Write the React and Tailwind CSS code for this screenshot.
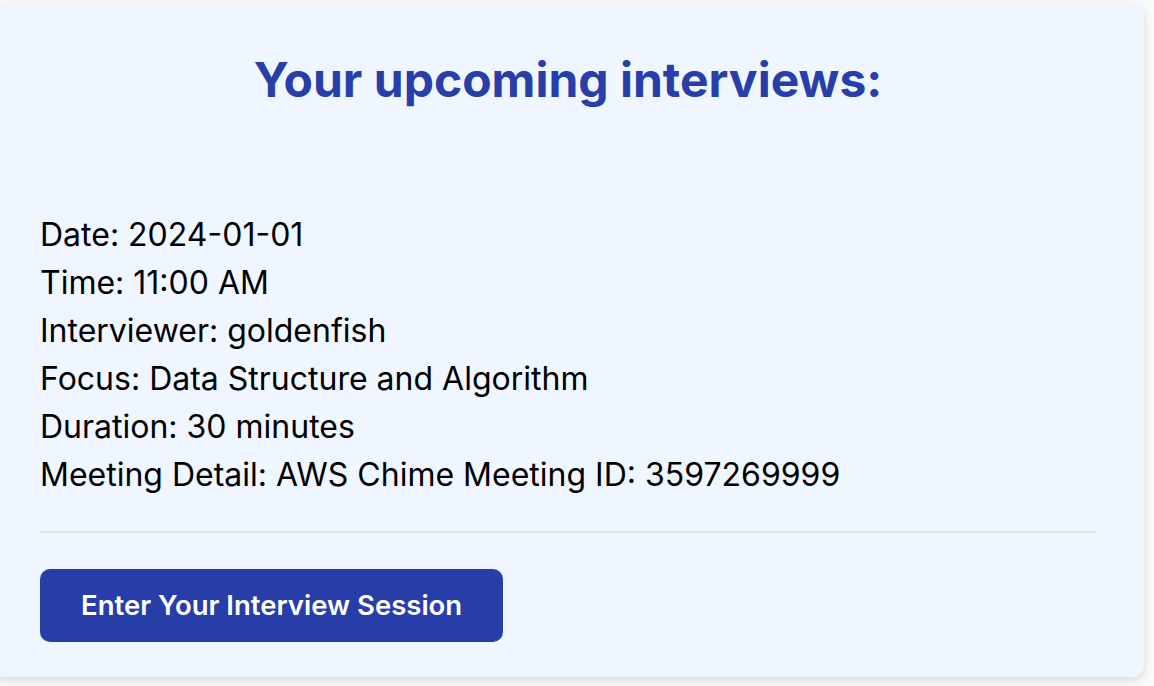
import React from 'react'

const interview = {
  date: '2024-01-01',
  time: '11:00 AM',
  interviewer: 'goldenfish',
  focus: 'Data Structure and Algorithm',
  duration: '30 minutes',
  meeting: 'AWS Chime Meeting ID: 3597269999',
}

const App = () => {
  return (
    <div className="min-h-screen bg-[#fafafa] pt-[3px] font-['Inter',sans-serif] overflow-hidden">
      <div className="ml-[-8px] w-[1152px] h-[674px] bg-[#eff6ff] rounded-xl shadow-[0_4px_10px_rgba(0,0,0,0.12)] px-12 pt-12">
        <h1 className="text-center text-[48px] leading-[58px] font-bold text-[#283ea8]">
          Your upcoming interviews:
        </h1>

        <div className="mt-[102px] text-[32px] leading-[48px] text-black">
          <p>Date: {interview.date}</p>
          <p>Time: {interview.time}</p>
          <p>Interviewer: {interview.interviewer}</p>
          <p>Focus: {interview.focus}</p>
          <p>Duration: {interview.duration}</p>
          <p>Meeting Detail: {interview.meeting}</p>
        </div>

        <hr className="mt-[32px] border-0 h-[2px] bg-[#e2e5ea]" />

        <button className="mt-[36px] h-[73px] px-[41px] rounded-[10px] bg-[#273ea9] text-white text-[27.5px] font-semibold">
          Enter Your Interview Session
        </button>
      </div>
    </div>
  )
}

export default App
